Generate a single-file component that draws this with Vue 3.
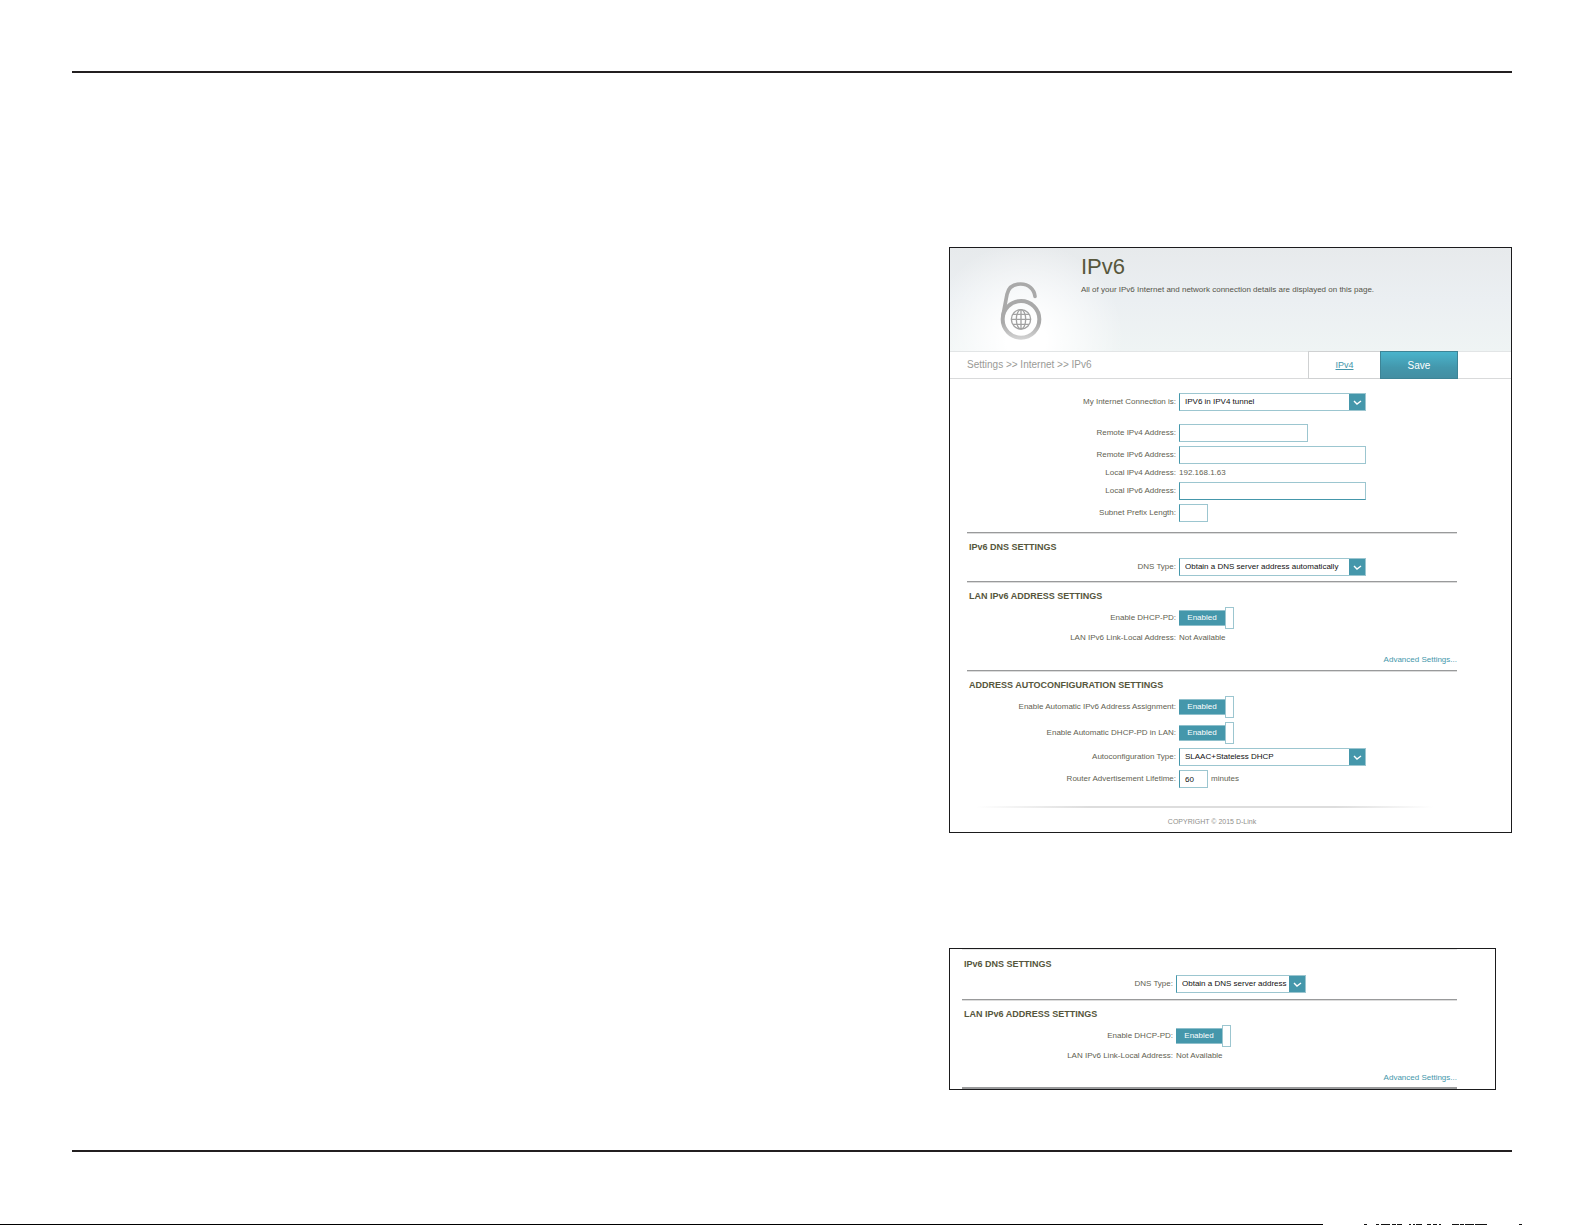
<script setup>
import { reactive } from 'vue'

const form = reactive({
  connection: 'IPV6 in IPV4 tunnel',
  remoteV4: '',
  remoteV6: '',
  localV6: '',
  prefix: '',
  dns: 'Obtain a DNS server address automatically',
  dhcpPd: true,
  autoAssign: true,
  autoPd: true,
  autoType: 'SLAAC+Stateless DHCP',
  lifetime: '60',
  dnsShort: 'Obtain a DNS server address',
  dhcpPdShort: true,
})
</script>

<template>
  <div class="page">
    <main class="sheet">
      <div class="figures">
        <section class="panel">
          <header class="hero">
            <svg class="lock" viewBox="0 0 126 180" aria-hidden="true">
              <defs>
                <linearGradient id="metal" x1="0" y1="0" x2="0" y2="180" gradientUnits="userSpaceOnUse">
                  <stop offset="0" stop-color="#a9a9a9" />
                  <stop offset="0.7" stop-color="#a9a9a9" />
                  <stop offset="1" stop-color="#d8d8d8" />
                </linearGradient>
              </defs>
              <g fill="none" stroke="url(#metal)" stroke-linecap="round">
                <circle cx="63" cy="115" r="55" stroke-width="12" />
                <path d="M9 103 L21 40 C26 17 44 9 62 9 C86 9 103 25 105 46" stroke-width="11" />
              </g>
              <g fill="none" stroke="#a2a2a2" stroke-width="4">
                <circle cx="63" cy="115" r="29" />
                <ellipse cx="63" cy="115" rx="14" ry="29" />
                <path d="M63 86 V144 M34 115 H92 M39 100 H87 M39 130 H87" />
              </g>
            </svg>
            <div class="intro">
              <h1>IPv6</h1>
              <p>All of your IPv6 Internet and network connection details are displayed on this page.</p>
            </div>
          </header>

          <nav class="bar">
            <span class="crumbs">Settings &gt;&gt; Internet &gt;&gt; IPv6</span>
            <span class="tab"><a href="#ipv4">IPv4</a></span>
            <button class="save" type="button">Save</button>
          </nav>

          <form class="content" @submit.prevent>
            <div class="group first">
              <div class="row spaced">
                <label for="connection">My Internet Connection is:</label>
                <span class="pick">
                  <select id="connection" v-model="form.connection">
                    <option>IPV6 in IPV4 tunnel</option>
                  </select>
                  <svg viewBox="0 0 16 16" aria-hidden="true"><path d="M5 7 L8 10 L12 7" /></svg>
                </span>
              </div>
              <div class="row">
                <label for="remote4">Remote IPv4 Address:</label>
                <input id="remote4" v-model="form.remoteV4" class="field medium" type="text" />
              </div>
              <div class="row">
                <label for="remote6">Remote IPv6 Address:</label>
                <input id="remote6" v-model="form.remoteV6" class="field" type="text" />
              </div>
              <div class="row">
                <span class="name">Local IPv4 Address:</span>
                <span class="value">192.168.1.63</span>
              </div>
              <div class="row">
                <label for="local6">Local IPv6 Address:</label>
                <input id="local6" v-model="form.localV6" class="field strong" type="text" />
              </div>
              <div class="row">
                <label for="prefix">Subnet Prefix Length:</label>
                <input id="prefix" v-model="form.prefix" class="field tiny" type="text" />
              </div>
            </div>

            <div class="group">
              <h2>IPv6 DNS SETTINGS</h2>
              <div class="row">
                <label for="dns">DNS Type:</label>
                <span class="pick">
                  <select id="dns" v-model="form.dns">
                    <option>Obtain a DNS server address automatically</option>
                  </select>
                  <svg viewBox="0 0 16 16" aria-hidden="true"><path d="M5 7 L8 10 L12 7" /></svg>
                </span>
              </div>
            </div>

            <div class="group">
              <h2>LAN IPv6 ADDRESS SETTINGS</h2>
              <div class="row">
                <label for="pd">Enable DHCP-PD:</label>
                <span class="switch">
                  <input id="pd" v-model="form.dhcpPd" type="checkbox" />
                  <span class="state">Enabled</span><span class="knob"></span>
                </span>
              </div>
              <div class="row">
                <span class="name">LAN IPv6 Link-Local Address:</span>
                <span class="value">Not Available</span>
              </div>
              <a class="more" href="#advanced">Advanced Settings...</a>
            </div>

            <div class="group">
              <h2>ADDRESS AUTOCONFIGURATION SETTINGS</h2>
              <div class="row">
                <label for="assign">Enable Automatic IPv6 Address Assignment:</label>
                <span class="switch">
                  <input id="assign" v-model="form.autoAssign" type="checkbox" />
                  <span class="state">Enabled</span><span class="knob"></span>
                </span>
              </div>
              <div class="row">
                <label for="autopd">Enable Automatic DHCP-PD in LAN:</label>
                <span class="switch">
                  <input id="autopd" v-model="form.autoPd" type="checkbox" />
                  <span class="state">Enabled</span><span class="knob"></span>
                </span>
              </div>
              <div class="row">
                <label for="autotype">Autoconfiguration Type:</label>
                <span class="pick">
                  <select id="autotype" v-model="form.autoType">
                    <option>SLAAC+Stateless DHCP</option>
                  </select>
                  <svg viewBox="0 0 16 16" aria-hidden="true"><path d="M5 7 L8 10 L12 7" /></svg>
                </span>
              </div>
              <div class="row">
                <label for="lifetime">Router Advertisement Lifetime:</label>
                <span class="value">
                  <input id="lifetime" v-model="form.lifetime" class="field tiny" type="text" />
                  minutes
                </span>
              </div>
            </div>
          </form>
          <footer class="copyright">COPYRIGHT © 2015 D-Link</footer>
        </section>

        <section class="panel excerpt">
          <form class="content" @submit.prevent>
            <div class="group">
              <h2>IPv6 DNS SETTINGS</h2>
              <div class="row">
                <label for="dns2">DNS Type:</label>
                <span class="pick narrow">
                  <select id="dns2" v-model="form.dnsShort">
                    <option>Obtain a DNS server address</option>
                  </select>
                  <svg viewBox="0 0 16 16" aria-hidden="true"><path d="M5 7 L8 10 L12 7" /></svg>
                </span>
              </div>
            </div>
            <div class="group">
              <h2>LAN IPv6 ADDRESS SETTINGS</h2>
              <div class="row">
                <label for="pd2">Enable DHCP-PD:</label>
                <span class="switch">
                  <input id="pd2" v-model="form.dhcpPdShort" type="checkbox" />
                  <span class="state">Enabled</span><span class="knob"></span>
                </span>
              </div>
              <div class="row">
                <span class="name">LAN IPv6 Link-Local Address:</span>
                <span class="value">Not Available</span>
              </div>
              <a class="more" href="#advanced">Advanced Settings...</a>
            </div>
          </form>
        </section>
      </div>
    </main>
    <div class="edge">
      <span class="edge-line"></span>
      <svg viewBox="0 0 158 1" aria-hidden="true">
        <path d="M0 .5h3M12 .5h3M17 .5h9M28 .5h4M33 .5h5M45 .5h2M49 .5h2M52 .5h6M63 .5h4M69 .5h4M75 .5h2M88 .5h7M96 .5h4M101 .5h9M111 .5h12M155 .5h3" />
      </svg>
    </div>
  </div>
</template>

<style>
body {
  margin: 0;
  background: #fff;
}
</style>

<style scoped>
* {
  box-sizing: border-box;
}
.page {
  min-height: 100vh;
  display: flex;
  flex-direction: column;
  padding-top: 71px;
  font: 8px/10px "Liberation Sans", Arial, sans-serif;
  color: #5f5f52;
}
.sheet {
  margin: 0 73px 0 72px;
  border-top: 2px solid #231f20;
  border-bottom: 2px solid #231f20;
  padding: 174px 0 60px;
  display: grid;
  grid-template-columns: minmax(0, 156fr) minmax(563px, 100fr);
}
.figures {
  grid-column: 2;
  display: flex;
  flex-direction: column;
  gap: 115px;
}
.panel {
  border: 1px solid #1b1b1d;
  background: #fff;
}
.hero {
  height: 103px;
  display: flex;
  gap: 39px;
  padding-left: 50px;
  background:
    radial-gradient(circle at 76px 92px, #fff 20px, rgba(255, 255, 255, 0) 98px),
    linear-gradient(#e7eaec, #ebeff2 50%, #eff4f4);
}
.lock {
  width: 42px;
  height: 60px;
  margin-top: 33px;
}
.intro {
  padding-top: 7px;
}
h1 {
  margin: 0;
  font-size: 22px;
  line-height: 24px;
  font-weight: 400;
  color: #57573c;
}
.intro p {
  margin: 6px 0 0;
  color: #55554a;
}
.bar {
  height: 28px;
  display: flex;
  align-items: stretch;
  padding: 0 53px 0 17px;
  border-top: 1px solid #e2e5e6;
  border-bottom: 1px solid #d9dadb;
  font-size: 10px;
}
.crumbs {
  flex: 1;
  line-height: 26px;
  color: #9a9a96;
}
.tab {
  width: 72px;
  margin: -1px 0;
  border: 1px solid #cfd1d2;
  border-right: 0;
  text-align: center;
  font-size: 9px;
  line-height: 26px;
}
.tab a {
  color: #4596ab;
}
.save {
  width: 78px;
  margin: -1px 0;
  padding: 0;
  border: 1px solid #3d8496;
  background: linear-gradient(#4ab4cc, #4397ac 60%, #438ea2);
  color: #fff;
  font: 10px "Liberation Sans", Arial, sans-serif;
}
.content {
  margin: 0 54px 0 17px;
}
.group {
  display: flex;
  flex-direction: column;
  gap: 4px;
  padding-bottom: 5px;
}
.group + .group {
  border-top: 1px solid #999a9b;
  box-shadow: inset 0 1px #dcdcdc;
  padding-top: 8px;
}
.first {
  padding: 14px 0 10px;
}
.spaced {
  margin-bottom: 9px;
}
h2 {
  margin: 0 0 1px 2px;
  font-size: 9px;
  line-height: 12px;
  font-weight: 700;
  color: #56563c;
}
.row {
  display: grid;
  grid-template-columns: 209px 1fr;
  column-gap: 3px;
  align-items: center;
}
.row > label,
.name {
  text-align: right;
}
.value {
  display: flex;
  align-items: center;
  gap: 3px;
}
.field,
.pick {
  width: 187px;
  height: 18px;
  border: 1px solid #9cc6d0;
  border-left-color: #4597ab;
}
.field {
  padding: 1px 5px 0;
  background: #fff;
  color: #111;
  font: inherit;
}
.medium {
  width: 129px;
}
.tiny {
  width: 29px;
}
.strong {
  border-bottom-color: #4597ab;
}
.pick {
  display: flex;
}
.narrow {
  width: 130px;
}
select {
  appearance: none;
  flex: 1;
  min-width: 0;
  padding: 0 0 0 5px;
  border: 0;
  background: none;
  color: #111;
  font: inherit;
}
.pick svg {
  width: 16px;
  height: 16px;
  background: #4597ab;
  fill: none;
  stroke: #fff;
  stroke-width: 1.4;
}
.switch {
  position: relative;
  display: flex;
  align-items: center;
  height: 22px;
}
.switch input {
  position: absolute;
  width: 55px;
  height: 22px;
  left: 0;
  margin: 0;
  opacity: 0;
}
.state {
  width: 46px;
  border-top: 1px solid #8fc0cc;
  border-bottom: 1px solid #8fc0cc;
  background: #4597ab;
  color: #fff;
  line-height: 14px;
  text-align: center;
}
.knob {
  width: 9px;
  height: 22px;
  border: 1px solid #9cc6d0;
  background: #fff;
}
.more {
  align-self: flex-end;
  margin-top: 8px;
  color: #4597ab;
  text-decoration: none;
}
.copyright {
  margin: 13px 54px 0 17px;
  padding: 9px 0 5px;
  border-top: 2px solid;
  border-image: linear-gradient(90deg, #fff 2%, #ddd 25%, #ddd 75%, #fff 95%) 1;
  text-align: center;
  font-size: 7px;
  color: #8f8f8b;
}
.excerpt {
  margin-right: 16px;
}
.excerpt .content {
  margin: 0 38px 0 12px;
  border-top: 1px solid #e8e8e8;
  border-bottom: 2px solid #999a9b;
}
.excerpt .group:first-child {
  padding: 8px 0 6px;
}
.excerpt .group:last-child {
  padding-bottom: 4px;
}
.excerpt .row {
  grid-template-columns: 211px 1fr;
}
.edge {
  display: flex;
  justify-content: space-between;
  height: 1px;
  margin-top: auto;
  padding-right: 63px;
}
.edge-line {
  flex: 0 1 1323px;
  background: #000;
}
.edge svg {
  width: 158px;
  height: 1px;
  stroke: #111;
}
</style>
